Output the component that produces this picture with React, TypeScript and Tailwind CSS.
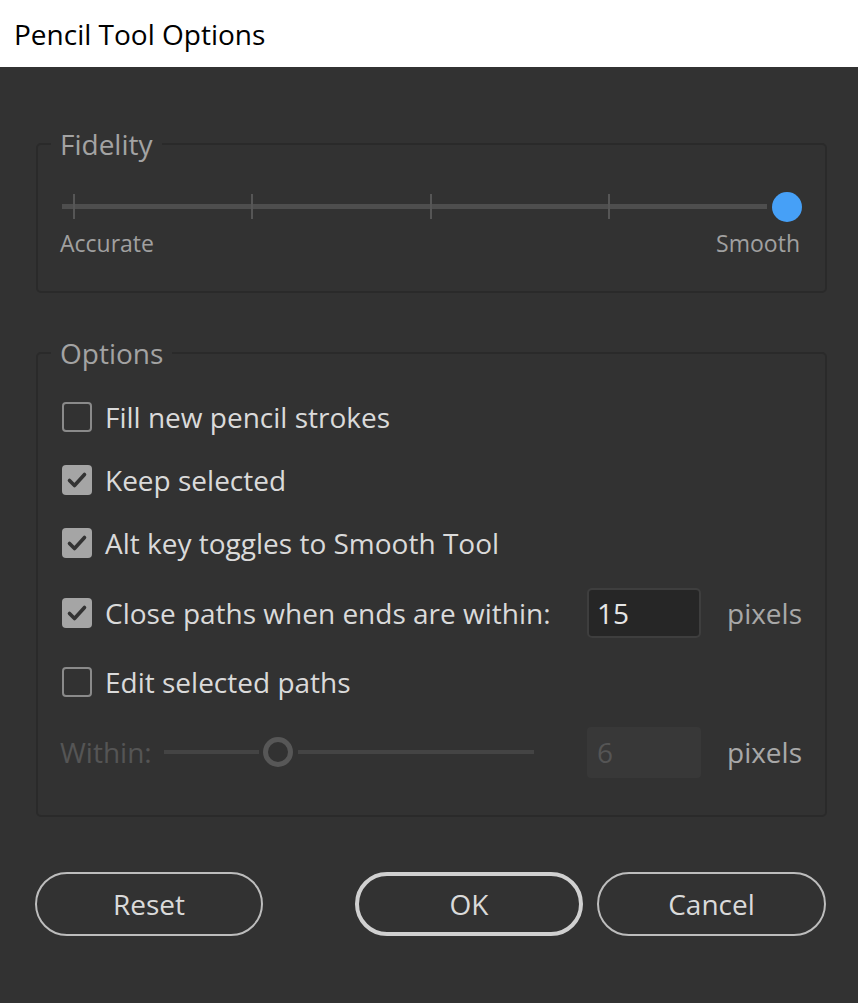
import React from "react";

const font = { fontFamily: '"Open Sans", "Noto Sans", sans-serif' };

function Check({ checked }: { checked: boolean }) {
  if (checked) {
    return (
      <div className="w-[30px] h-[30px] rounded-[4px] bg-[#a5a5a5] flex items-center justify-center shrink-0">
        <svg width="30" height="30" viewBox="0 0 30 30">
          <path d="M7.5 15.5 L12.5 20.5 L22.5 9.5" fill="none" stroke="#333333" strokeWidth="3.6" strokeLinecap="round" strokeLinejoin="round" />
        </svg>
      </div>
    );
  }
  return <div className="w-[30px] h-[30px] rounded-[4px] border-2 border-[#8a8a8a] shrink-0" />;
}

function CheckRow({ checked, label, className = "" }: { checked: boolean; label: string; className?: string }) {
  return (
    <div className={"flex items-center h-[30px] gap-[13px] " + className}>
      <Check checked={checked} />
      <span className="text-[28px] leading-[30px] text-[#dadada]">{label}</span>
    </div>
  );
}

export default function App() {
  const ticks = [12, 190, 369, 547];
  return (
    <div className="w-[858px] h-[1003px] bg-[#323232] flex flex-col" style={font}>
      <div className="h-[67px] bg-white flex items-center pl-[14px] shrink-0">
        <span className="text-[28px] leading-[34px] text-black">Pencil Tool Options</span>
      </div>

      <fieldset className="ml-[36px] mr-[31px] mt-[63px] border-2 border-[#2a2a2a] rounded-[5px] p-0 min-w-0">
        <legend className="ml-[13px] px-[9px] text-[28px] leading-[28px] text-[#a3a3a3]">Fidelity</legend>
        <div className="pl-[24px] pr-[23px] pt-[34px] pb-[32px]">
          <div className="relative h-[30px]">
            <div className="absolute left-0 right-[35px] top-[12px] h-[5px] bg-[#4e4e4e]" />
            {ticks.map((t) => (
              <div key={t} className="absolute top-[2px] h-[25px] w-[2px] bg-[#565656]" style={{ left: t - 1 }} />
            ))}
            <div className="absolute right-0 top-0 w-[30px] h-[30px] rounded-full bg-[#46a0f7]" />
          </div>
          <div className="flex justify-between mt-[5px] ml-[-2px] mr-[2px] text-[23px] leading-[32px] text-[#a0a0a0]">
            <span>Accurate</span>
            <span>Smooth</span>
          </div>
        </div>
      </fieldset>

      <fieldset className="ml-[36px] mr-[31px] mt-[46px] border-2 border-[#2a2a2a] rounded-[5px] p-0 min-w-0">
        <legend className="ml-[13px] px-[9px] text-[28px] leading-[28px] text-[#a3a3a3]">Options</legend>
        <div className="pl-[24px] pr-[23px] pt-[35px] pb-[38px] flex flex-col">
          <CheckRow checked={false} label="Fill new pencil strokes" />
          <CheckRow checked={true} label="Keep selected" className="mt-[33px]" />
          <CheckRow checked={true} label="Alt key toggles to Smooth Tool" className="mt-[33px]" />

          <div className="flex items-center h-[50px] mt-[30px]">
            <Check checked={true} />
            <span className="ml-[13px] flex-1 text-[28px] leading-[30px] text-[#dadada]">Close paths when ends are within:</span>
            <div className="w-[114px] h-[50px] rounded-[5px] border-2 border-[#3e3e3e] bg-[#262626] flex items-center pl-[8px]">
              <span className="text-[28px] leading-[30px] text-[#e6e6e6]">15</span>
            </div>
            <span className="ml-[26px] text-[28px] leading-[30px] text-[#a8a8a8]">pixels</span>
          </div>

          <CheckRow checked={false} label="Edit selected paths" className="mt-[29px]" />

          <div className="flex items-center h-[50px] mt-[30px]">
            <span className="ml-[-2px] text-[28px] leading-[30px] text-[#555555]">Within:</span>
            <div className="relative ml-[12px] w-[370px] h-[30px]">
              <div className="absolute left-0 w-[95px] top-[13px] h-[4px] bg-[#444444]" />
              <div className="absolute left-[134px] right-0 top-[13px] h-[4px] bg-[#444444]" />
              <div className="absolute left-[99px] top-0 w-[30px] h-[30px] rounded-full border-[5px] border-[#575757]" />
            </div>
            <div className="flex-1" />
            <div className="w-[114px] h-[51px] rounded-[4px] bg-[#383838] flex items-center pl-[10px]">
              <span className="text-[28px] leading-[30px] text-[#555555]">6</span>
            </div>
            <span className="ml-[26px] text-[28px] leading-[30px] text-[#a8a8a8]">pixels</span>
          </div>
        </div>
      </fieldset>

      <div className="flex mt-[55px] ml-[35px]">
        <button className="w-[228px] h-[64px] rounded-full border-2 border-[#bdbdbd] text-[28px] text-[#dadada] flex items-center justify-center">
          Reset
        </button>
        <button className="ml-[92px] w-[228px] h-[64px] rounded-full border-[4px] border-[#d0d0d0] text-[28px] text-[#dadada] flex items-center justify-center">
          OK
        </button>
        <button className="ml-[14px] w-[229px] h-[64px] rounded-full border-2 border-[#bdbdbd] text-[28px] text-[#dadada] flex items-center justify-center">
          Cancel
        </button>
      </div>
    </div>
  );
}
